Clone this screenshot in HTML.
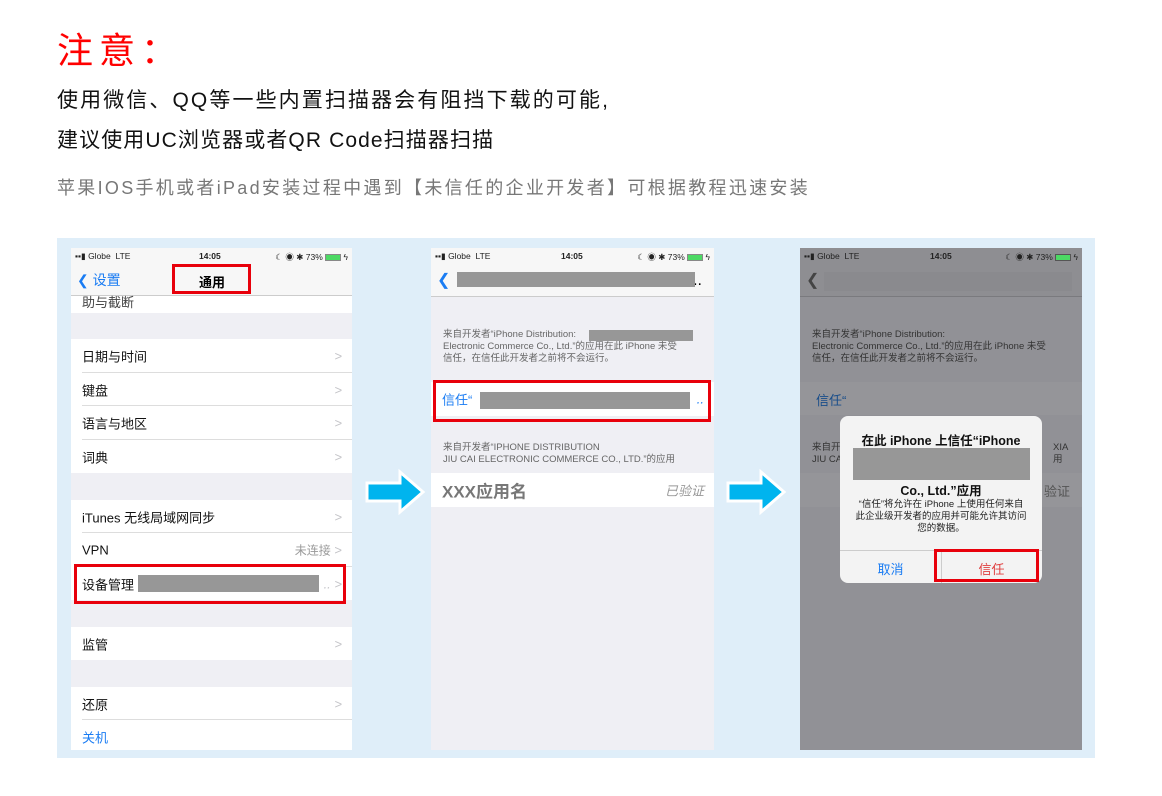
<!DOCTYPE html>
<html><head><meta charset="utf-8"><style>
*{margin:0;padding:0;box-sizing:border-box}
body{width:1162px;height:796px;background:#fff;position:relative;overflow:hidden;font-family:"Liberation Sans","Noto Sans CJK SC",sans-serif}
.a{position:absolute}
.t1{left:57px;top:22px;font-size:36px;color:#f00;letter-spacing:6px}
.t2{left:57px;top:84px;font-size:21px;color:#111;letter-spacing:2.1px}
.t3{left:57px;top:124px;font-size:21px;color:#111;letter-spacing:1.1px}
.t4{left:57px;top:174px;font-size:18px;color:#777;letter-spacing:2.3px}
.panel{left:57px;top:238px;width:1038px;height:520px;background:#dfeef9}
.ph{background:#efeff4;overflow:hidden}
.sb{left:0;top:0;width:100%;height:16px;font-size:8.5px;color:#222}
.row{position:absolute;left:0;width:100%;background:#fff;font-size:13px;color:#111}
.row span{position:absolute;left:11px;top:50%;transform:translateY(-50%)}
.ln{position:absolute;left:11px;right:0;bottom:0;height:1px;background:#ddd}
.chev{position:absolute;right:10px;top:50%;transform:translateY(-50%);color:#c4c4c8;font-size:13px}
.red{position:absolute;border:3px solid #e8000b}
.gray{position:absolute;background:#979797}
.small{font-size:9.5px;color:#666;line-height:12px}
</style></head><body>
<div class="a t1">注意：</div>
<div class="a t2">使用微信、QQ等一些内置扫描器会有阻挡下载的可能,</div>
<div class="a t3">建议使用UC浏览器或者QR Code扫描器扫描</div>
<div class="a t4">苹果IOS手机或者iPad安装过程中遇到【未信任的企业开发者】可根据教程迅速安装</div>
<div class="a panel"></div>

<!-- phone 1 -->
<div class="a ph" style="left:71px;top:248px;width:281px;height:502px">
 <div class="a sb" style="background:#f7f7f7"><span class="a" style="left:4px;top:3px">▪▪▮ Globe&nbsp;&nbsp;LTE</span><span class="a" style="left:128px;top:3px;font-weight:bold">14:05</span><span class="a" style="right:4px;top:3px">☾ ◉ ✱ 73% <span style="display:inline-block;width:16px;height:7px;border:1px solid #888;background:#4cd964;vertical-align:middle"></span> ϟ</span></div>
 <div class="a" style="left:0;top:16px;width:100%;height:32px;background:#f7f7f7;border-bottom:1px solid #ccc"><span class="a" style="left:6px;top:6px;color:#1a7cf3;font-size:14px">❮ 设置</span><span class="a" style="left:128px;top:8px;font-size:13px;font-weight:bold">通用</span></div>
 <div class="row" style="top:48px;height:17px"><span style="color:#444;top:-4px;transform:none">助与截断</span></div>
 <div class="row" style="top:91px;height:34px"><span>日期与时间</span><i class="chev">&gt;</i><b class="ln"></b></div>
 <div class="row" style="top:125px;height:33px"><span>键盘</span><i class="chev">&gt;</i><b class="ln"></b></div>
 <div class="row" style="top:158px;height:34px"><span>语言与地区</span><i class="chev">&gt;</i><b class="ln"></b></div>
 <div class="row" style="top:192px;height:33px"><span>词典</span><i class="chev">&gt;</i></div>
 <div class="row" style="top:252px;height:33px"><span>iTunes 无线局域网同步</span><i class="chev">&gt;</i><b class="ln"></b></div>
 <div class="row" style="top:285px;height:34px"><span>VPN</span><i class="chev" style="font-style:normal"><em style="font-style:normal;color:#999;font-size:12px">未连接</em> &gt;</i><b class="ln"></b></div>
 <div class="row" style="top:319px;height:33px"><span>设备管理</span><i class="chev">.. &gt;</i></div>
 <div class="gray" style="left:67px;top:327px;width:181px;height:17px"></div>
 <div class="row" style="top:379px;height:33px"><span>监管</span><i class="chev">&gt;</i></div>
 <div class="row" style="top:439px;height:63px"><span style="top:17px">还原</span><i class="chev" style="top:17px">&gt;</i><b class="ln" style="bottom:30px"></b><span style="top:50px;color:#1a7cf3">关机</span></div>
</div>
<div class="red" style="left:172px;top:264px;width:79px;height:30px"></div>
<div class="red" style="left:74px;top:564px;width:272px;height:40px"></div>

<!-- arrows -->
<svg class="a" style="left:362px;top:467px" width="66" height="50"><path d="M5 16h33V5l23 20-23 20V34H5z" fill="#00b4ee" stroke="#fff" stroke-width="3"/></svg>
<svg class="a" style="left:723px;top:467px" width="66" height="50"><path d="M5 16h33V5l23 20-23 20V34H5z" fill="#00b4ee" stroke="#fff" stroke-width="3"/></svg>

<!-- phone 2 -->
<div class="a ph" style="left:431px;top:248px;width:283px;height:502px">
 <div class="a sb" style="background:#f7f7f7"><span class="a" style="left:4px;top:3px">▪▪▮ Globe&nbsp;&nbsp;LTE</span><span class="a" style="left:130px;top:3px;font-weight:bold">14:05</span><span class="a" style="right:4px;top:3px">☾ ◉ ✱ 73% <span style="display:inline-block;width:16px;height:7px;border:1px solid #888;background:#4cd964;vertical-align:middle"></span> ϟ</span></div>
 <div class="a" style="left:0;top:16px;width:100%;height:33px;background:#f7f7f7;border-bottom:1px solid #ccc"><span class="a" style="left:6px;top:6px;color:#1a7cf3;font-size:16px">❮</span><span class="a" style="right:12px;top:8px">..</span></div>
 <div class="gray" style="left:26px;top:24px;width:238px;height:15px"></div>
 <div class="a small" style="left:12px;top:81px;width:265px">来自开发者“iPhone Distribution:<br>Electronic Commerce Co., Ltd.”的应用在此 iPhone 未受<br>信任，在信任此开发者之前将不会运行。</div>
 <div class="gray" style="left:158px;top:82px;width:104px;height:11px"></div>
 <div class="row" style="top:134px;height:34px"><span style="color:#1a7cf3">信任“</span><i class="chev" style="color:#1a7cf3">..</i></div>
 <div class="gray" style="left:49px;top:144px;width:210px;height:17px"></div>
 <div class="a small" style="left:12px;top:194px">来自开发者“IPHONE DISTRIBUTION<br>JIU CAI ELECTRONIC COMMERCE CO., LTD.”的应用</div>
 <div class="row" style="top:225px;height:34px"><span style="font-size:17px;color:#777;font-weight:bold">XXX应用名</span><i class="chev" style="color:#999;font-size:13px">已验证</i></div>
</div>
<div class="red" style="left:433px;top:380px;width:278px;height:42px"></div>

<!-- phone 3 -->
<div class="a ph" style="left:800px;top:248px;width:282px;height:502px;background:#919196">
 <div class="a sb" style="background:#8e8e92"><span class="a" style="left:4px;top:3px">▪▪▮ Globe&nbsp;&nbsp;LTE</span><span class="a" style="left:130px;top:3px;font-weight:bold">14:05</span><span class="a" style="right:4px;top:3px">☾ ◉ ✱ 73% <span style="display:inline-block;width:16px;height:7px;border:1px solid #555;background:#4cd964;vertical-align:middle"></span> ϟ</span></div>
 <div class="a" style="left:0;top:16px;width:100%;height:33px;background:#8e8e92;border-bottom:1px solid #7a7a7e"><span class="a" style="left:6px;top:6px;color:#444;font-size:16px">❮</span><span class="a" style="right:12px;top:8px">..</span></div>
 <div class="a" style="left:24px;top:24px;width:248px;height:19px;background:#8a8a8e"></div>
 <div class="a small" style="left:12px;top:81px;color:#333">来自开发者“iPhone Distribution:<br>Electronic Commerce Co., Ltd.”的应用在此 iPhone 未受<br>信任，在信任此开发者之前将不会运行。</div>
 <div class="a" style="left:0;top:134px;width:100%;height:33px;background:#959599"><span class="a" style="left:16px;top:8px;color:#184d8a;font-size:13px">信任“</span></div>
 <div class="a small" style="left:12px;top:194px;color:#333">来自开<br>JIU CA</div>
 <div class="a small" style="left:253px;top:194px;color:#333">XIA<br>用</div>
 <div class="a" style="left:0;top:225px;width:100%;height:34px;background:#959599"><span class="a" style="right:12px;top:8px;color:#555;font-size:13px">验证</span></div>
 <div class="a" style="left:40px;top:168px;width:202px;height:167px;background:#f3f3f3;border-radius:8px;text-align:center">
  <div style="font-size:12.5px;font-weight:bold;margin-top:14px;color:#111">在此 iPhone 上信任“iPhone</div>
  <div class="gray" style="left:13px;top:32px;width:177px;height:32px"></div>
  <div class="a" style="left:0;width:100%;top:64px;font-size:12.5px;font-weight:bold;color:#111">Co., Ltd.”应用</div>
  <div class="a" style="left:14px;width:174px;top:83px;font-size:9.5px;line-height:12px;color:#222">“信任”将允许在 iPhone 上使用任何来自此企业级开发者的应用并可能允许其访问您的数据。</div>
  <div class="a" style="left:0;top:134px;width:100%;height:1px;background:#ccc"></div>
  <div class="a" style="left:101px;top:134px;width:1px;height:33px;background:#ccc"></div>
  <div class="a" style="left:0;top:143px;width:101px;color:#1a7cf3;font-size:13px">取消</div>
  <div class="a" style="left:101px;top:143px;width:101px;color:#e04040;font-size:13px">信任</div>
 </div>
</div>
<div class="red" style="left:934px;top:549px;width:105px;height:33px"></div>
</body></html>
